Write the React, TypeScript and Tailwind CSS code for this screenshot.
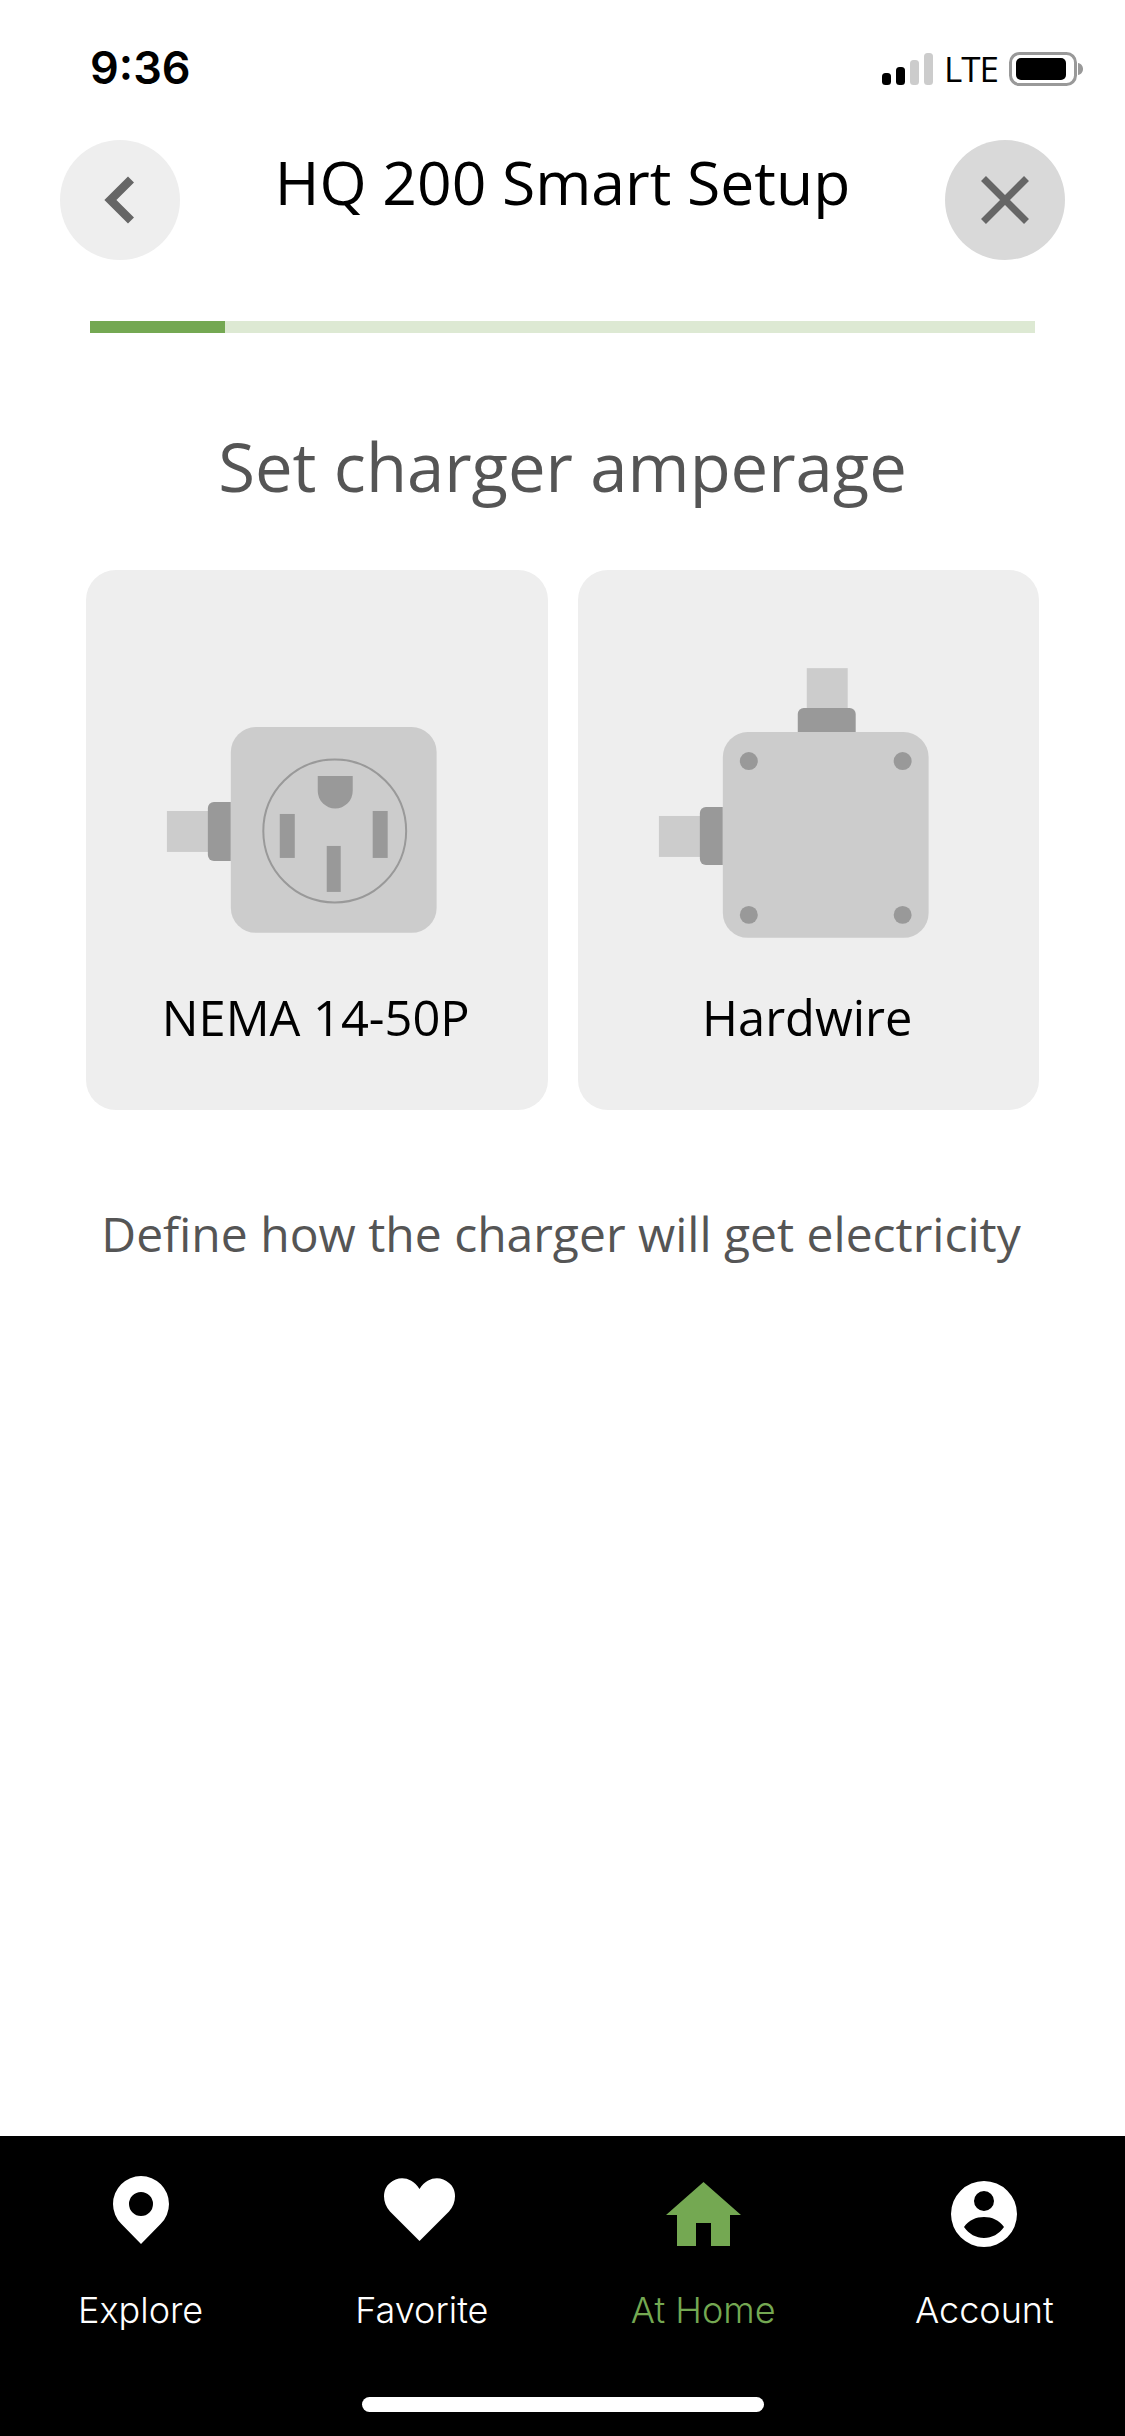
const openSans = "font-['Open_Sans',sans-serif]";

function SignalIcon() {
  return (
    <svg width="52" height="33" viewBox="0 0 52 33" className="block">
      <rect x="0" y="20" width="9" height="12" rx="3.5" fill="#000" />
      <rect x="14" y="14" width="9" height="18" rx="3.5" fill="#000" />
      <rect x="28" y="7" width="9" height="25" rx="3.5" fill="#ccc" />
      <rect x="42" y="0" width="9" height="32" rx="3.5" fill="#ccc" />
    </svg>
  );
}

function BatteryIcon() {
  return (
    <svg width="74" height="34" viewBox="0 0 74 34" className="block">
      <rect x="1.5" y="1.5" width="65" height="31" rx="9" fill="none" stroke="#999" strokeWidth="3" />
      <rect x="7" y="6" width="50" height="22" rx="5" fill="#000" />
      <path d="M69 11c3 .5 5 3 5 6s-2 5.500-5 6z" fill="#999" />
    </svg>
  );
}

function StatusBar() {
  return (
    <div className="flex h-[140px] items-start justify-between pl-[90px] pr-[42px] pt-[44px]">
      <span className="font-['Inter',sans-serif] text-[45px] leading-[48px] font-semibold text-black">9:36</span>
      <div className="mt-[8px] flex items-center">
        <SignalIcon />
        <span className={`${openSans} ml-[10px] mr-[11px] text-[35px] leading-[34px] tracking-[-1px] text-black`}>LTE</span>
        <BatteryIcon />
      </div>
    </div>
  );
}

function Header() {
  return (
    <div className="flex h-[120px] items-start justify-between px-[60px]">
      <button className="flex h-[120px] w-[120px] items-center justify-center rounded-full bg-[#eee]">
        <svg width="30" height="48" viewBox="0 0 30 48" fill="none" stroke="#666" strokeWidth="8.5" className="mr-[3px]">
          <path d="M27 3.500 6.400 24 27 44.500" />
        </svg>
      </button>
      <h1 className={`${openSans} mt-[10px] text-[60.6px] leading-[64px] font-normal text-black`}>HQ 200 Smart Setup</h1>
      <button className="flex h-[120px] w-[120px] items-center justify-center rounded-full bg-[#d9d9d9]">
        <svg width="48" height="48" viewBox="0 0 48 48" fill="none" stroke="#666" strokeWidth="7">
          <path d="m2.500 2.500 43 43M45.500 2.500l-43 43" />
        </svg>
      </button>
    </div>
  );
}

function ProgressBar() {
  return (
    <div className="mx-[90px] mt-[61px] h-[12px] bg-[#dde9d3]">
      <div className="h-full w-[135px] bg-[#74a852]" />
    </div>
  );
}

// both drawings use the card's own coordinates, 462 wide and starting 80 below its top
function NemaPlug() {
  return (
    <svg viewBox="0 0 462 300" className="block h-[300px] w-full">
      <rect x="81" y="161" width="42" height="41" fill="#ccc" />
      <path d="M145 152v59h-17a6 6 0 0 1-6-6v-47a6 6 0 0 1 6-6z" fill="#999" />
      <rect x="145" y="77" width="206" height="206" rx="25" fill="#ccc" />
      <circle cx="249" cy="181" r="71.500" fill="none" stroke="#999" strokeWidth="2" />
      <path d="M232 126h35v15a17.500 17.500 0 0 1-35 0z" fill="#999" />
      <rect x="194" y="164" width="15" height="44" fill="#999" />
      <rect x="287" y="161" width="15" height="47" fill="#999" />
      <rect x="241" y="196" width="14" height="46" fill="#999" />
    </svg>
  );
}

function Hardwire() {
  return (
    <svg viewBox="0 0 462 300" className="block h-[300px] w-full">
      <rect x="81" y="166" width="42" height="41" fill="#ccc" />
      <path d="M145 157v58h-17a6 6 0 0 1-6-6v-46a6 6 0 0 1 6-6z" fill="#999" />
      <rect x="229" y="18" width="41" height="41" fill="#ccc" />
      <path d="M220 82V64a6 6 0 0 1 6-6h46a6 6 0 0 1 6 6v18z" fill="#999" />
      <rect x="145" y="82" width="206" height="206" rx="25" fill="#ccc" />
      <circle cx="171" cy="111" r="9" fill="#999" />
      <circle cx="325" cy="111" r="9" fill="#999" />
      <circle cx="171" cy="265" r="9" fill="#999" />
      <circle cx="325" cy="265" r="9" fill="#999" />
    </svg>
  );
}

function ChargerCard({ label, children }: { label: string; children: React.ReactNode }) {
  return (
    <div className="h-[540px] rounded-[30px] bg-[#eee] pt-[80px] text-center">
      {children}
      <p className={`${openSans} mt-[35px] pr-[2px] text-[48.8px] leading-[64px] text-black`}>{label}</p>
    </div>
  );
}

function TabItem({ label, active, icon }: { label: string; active?: boolean; icon: React.ReactNode }) {
  return (
    <div className="flex flex-col items-center">
      <div className="flex h-[72px] items-start justify-center">{icon}</div>
      <span
        className={`mt-[40px] font-['Inter',sans-serif] text-[36px] leading-[44px] font-light ${active ? "text-[#74a852]" : "text-white"}`}
      >
        {label}
      </span>
    </div>
  );
}

function TabBar() {
  return (
    <div className="flex h-[300px] flex-col bg-black pt-[40px]">
      <div className="grid grid-cols-4">
        <TabItem
          label="Explore"
          icon={
            <svg width="56" height="68" viewBox="0 0 56 68">
              <path
                fillRule="evenodd"
                d="M28 68 8.200 47.800a28 28 0 1 1 39.600 0zm0-52a12 12 0 1 0 0 24 12 12 0 0 0 0-24z"
                fill="#fff"
              />
            </svg>
          }
        />
        <TabItem
          label="Favorite"
          icon={
            <svg width="71" height="63" viewBox="0 0 71 63" className="mt-[2px] mr-[4px]">
              <path
                d="M35.500 63 6 33.500C-2 25-2 11 6 5c8-7 21-7 29.500 6C44-2 57-2 65 5c8 6 8 20 0 28.500z"
                fill="#fff"
              />
            </svg>
          }
        />
        <TabItem
          label="At Home"
          active
          icon={
            <svg width="75" height="64" viewBox="0 0 75 64" className="mt-[6px]">
              <path d="M37.500 0 75 33H64V64H45V41H30V64H11V33H0z" fill="#74a852" />
            </svg>
          }
        />
        <TabItem
          label="Account"
          icon={
            <svg width="66" height="66" viewBox="0 0 66 66" className="mt-[5px]">
              <path
                fillRule="evenodd"
                d="M33 0a33 33 0 1 1 0 66 33 33 0 0 1 0-66zm0 10a10 10 0 1 0 0 20 10 10 0 0 0 0-20zm0 26c-8 0-15 3-20 10 5 7 12 11 20 11s15-4 20-11c-5-7-12-10-20-10z"
                fill="#fff"
              />
            </svg>
          }
        />
      </div>
      <div className="mx-auto mt-auto mb-[24px] h-[15px] w-[402px] rounded-full bg-white" />
    </div>
  );
}

export default function App() {
  return (
    <div className="flex h-[2436px] w-[1125px] flex-col bg-white">
      <StatusBar />
      <Header />
      <ProgressBar />
      <h2 className={`${openSans} mt-[97px] text-center text-[67px] leading-[72px] font-normal text-[#555]`}>
        Set charger amperage
      </h2>
      <div className="mx-[86px] mt-[68px] grid grid-cols-2 gap-[30px]">
        <ChargerCard label="NEMA 14-50P">
          <NemaPlug />
        </ChargerCard>
        <ChargerCard label="Hardwire">
          <Hardwire />
        </ChargerCard>
      </div>
      <p className={`${openSans} mt-[92px] pr-[3px] text-center text-[48px] leading-[64px] text-[#555]`}>
        Define how the charger will get electricity
      </p>
      <div className="flex-1" />
      <TabBar />
    </div>
  );
}
